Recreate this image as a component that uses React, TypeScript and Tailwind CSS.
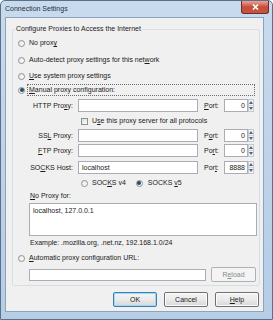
import React from "react";

const font = { fontFamily: '"Liberation Sans", Arial, sans-serif' };

const U: React.FC<{ children: React.ReactNode }> = ({ children }) => (
  <span className="underline underline-offset-[1px]">{children}</span>
);

const Radio: React.FC<{ checked?: boolean }> = ({ checked }) => (
  <span className="w-[7px] h-[7px] shrink-0 rounded-full border border-[#8e8f8f] bg-gradient-to-br from-[#e6e6e6] to-[#ffffff] flex items-center justify-center">
    {checked && <span className="w-[4px] h-[4px] rounded-full bg-[#1f4e6b]" />}
  </span>
);

const Check: React.FC = () => (
  <span className="w-[7px] h-[7px] shrink-0 border border-[#8e8f8f] bg-gradient-to-br from-[#dcdcdc] to-[#ffffff]" />
);

const Spinner: React.FC = () => (
  <div className="w-[6px] h-[13px] flex flex-col border border-[#c5c9cf] bg-[#f4f4f4]">
    <div className="flex-1 flex items-center justify-center border-b border-[#d0d4d9]">
      <svg width="4" height="3" viewBox="0 0 4 3">
        <path d="M0 3L2 0L4 3Z" fill="#4d6185" />
      </svg>
    </div>
    <div className="flex-1 flex items-center justify-center">
      <svg width="4" height="3" viewBox="0 0 4 3">
        <path d="M0 0L2 3L4 0Z" fill="#4d6185" />
      </svg>
    </div>
  </div>
);

const ProxyRow: React.FC<{
  label: React.ReactNode;
  port: React.ReactNode;
  host?: string;
  portValue: string;
  className?: string;
}> = ({ label, port, host, portValue, className }) => (
  <div className={"flex items-center h-[13px] " + (className ?? "")}>
    <div className="w-[65px] text-right pr-[5px]">{label}</div>
    <div className="w-[120px] h-[13px] border border-[#abadb3] bg-white flex items-center pl-[3px]">
      {host}
    </div>
    <div className="w-[26px] pl-[6px]">{port}</div>
    <div className="w-[24px] h-[13px] border border-[#abadb3] bg-white flex items-center justify-end pr-[2px]">
      {portValue}
    </div>
    <Spinner />
  </div>
);

const Button: React.FC<{ children: React.ReactNode; primary?: boolean }> = ({
  children,
  primary,
}) => (
  <div
    className={
      "w-[44px] h-[15px] rounded-[2px] border flex items-center justify-center bg-gradient-to-b from-[#f3f3f3] via-[#ebebeb] to-[#d6d6d6] " +
      (primary
        ? "border-[#3c7fb1] shadow-[inset_0_0_0_1px_#9fd9f7]"
        : "border-[#707070] shadow-[inset_0_0_0_1px_#fcfcfc]")
    }
  >
    {children}
  </div>
);

export default function App() {
  return (
    <div
      className="w-[273px] h-[320px] flex flex-col text-[7px] leading-[12px] text-[#1a1a1a] bg-gradient-to-b from-[#c8dbee] via-[#bed3e9] to-[#b6cde6] border border-[#5b6f86] rounded-t-[5px]"
      style={font}
    >
      {/* title bar */}
      <div className="h-[16px] flex items-start">
        <span className="pl-[4px] pt-[2px] text-[#1f2f40]">Connection Settings</span>
        <div className="ml-auto mr-[3px] w-[28px] h-[13px] rounded-b-[3px] border border-t-0 border-[#6d2a2a] bg-gradient-to-b from-[#e8a497] via-[#c94b3b] to-[#c2573f] flex items-center justify-center">
          <svg width="7" height="6" viewBox="0 0 7 6">
            <path d="M1 0.5L6 5.5M6 0.5L1 5.5" stroke="#fff" strokeWidth="1.6" />
          </svg>
        </div>
      </div>

      {/* client area */}
      <div className="ml-[4px] w-[259px] h-[295px] bg-[#f0f0f0] border border-[#8da2bc] flex flex-col">
        <fieldset className="ml-[6px] w-[248px] mt-[5px] h-[263px] border border-[#d5dfe5] rounded-[2px] flex flex-col">
          <legend className="ml-[2px] px-[1px] leading-[12px]">
            Configure Proxies to Access the Internet
          </legend>

          <div className="pl-[5px] flex flex-col">
            <div className="flex items-center gap-[4px] h-[12px] mt-[2px]">
              <Radio />
              <span>
                No prox<U>y</U>
              </span>
            </div>
            <div className="flex items-center gap-[4px] h-[12px] mt-[5px]">
              <Radio />
              <span>
                Auto-detect proxy settings for this net<U>w</U>ork
              </span>
            </div>
            <div className="flex items-center gap-[4px] h-[12px] mt-[4px]">
              <Radio />
              <span>
                <U>U</U>se system proxy settings
              </span>
            </div>
            <div className="flex items-center gap-[2px] h-[12px] mt-[2px]">
              <Radio checked />
              <span className="flex-1 mr-[4px] border border-dotted border-[#6b6b6b] pl-[1px] leading-[10px]">
                <U>M</U>anual proxy configuration:
              </span>
            </div>
          </div>

          <ProxyRow
            className="mt-[3px]"
            label={
              <>
                HTTP Pro<U>x</U>y:
              </>
            }
            port={
              <>
                <U>P</U>ort:
              </>
            }
            portValue="0"
          />

          <div className="flex items-center gap-[4px] h-[12px] mt-[3px] pl-[68px]">
            <Check />
            <span>
              U<U>s</U>e this proxy server for all protocols
            </span>
          </div>

          <ProxyRow
            className="mt-[2px]"
            label={
              <>
                SS<U>L</U> Proxy:
              </>
            }
            port={
              <>
                P<U>o</U>rt:
              </>
            }
            portValue="0"
          />
          <ProxyRow
            className="mt-[2px]"
            label={
              <>
                <U>F</U>TP Proxy:
              </>
            }
            port={
              <>
                Po<U>r</U>t:
              </>
            }
            portValue="0"
          />
          <ProxyRow
            className="mt-[4px]"
            label={
              <>
                SO<U>C</U>KS Host:
              </>
            }
            host="localhost"
            port={
              <>
                Por<U>t</U>:
              </>
            }
            portValue="8888"
          />

          <div className="flex items-center h-[12px] mt-[3px] pl-[68px]">
            <Radio />
            <span className="ml-[4px]">
              SOC<U>K</U>S v4
            </span>
            <span className="ml-[10px]">
              <Radio checked />
            </span>
            <span className="ml-[5px]">
              SOCKS <U>v</U>5
            </span>
          </div>

          <div className="h-[12px] mt-[1px] pl-[17px] flex items-center">
            <span>
              <U>N</U>o Proxy for:
            </span>
          </div>
          <div className="ml-[16px] w-[228px] h-[33px] mt-[1px] border border-[#abadb3] bg-white px-[3px] leading-[14px]">
            localhost, 127.0.0.1
          </div>
          <div className="h-[12px] mt-[1px] pl-[17px] flex items-center">
            Example: .mozilla.org, .net.nz, 192.168.1.0/24
          </div>

          <div className="flex items-center gap-[4px] h-[12px] mt-[3px] pl-[5px]">
            <Radio />
            <span>
              <U>A</U>utomatic proxy configuration URL:
            </span>
          </div>
          <div className="flex items-center h-[15px] mt-[3px] pl-[16px]">
            <div className="w-[177px] h-[12px] border border-[#abadb3] bg-white" />
            <div className="ml-[5px] w-[45px] h-[15px] rounded-[2px] border border-[#adb2b5] bg-[#f4f4f4] text-[#8a8a8a] flex items-center justify-center">
              R<U>e</U>load
            </div>
          </div>
        </fieldset>

        <div className="flex justify-end gap-[7px] mt-[6px] mr-[4px]">
          <Button primary>OK</Button>
          <Button>Cancel</Button>
          <Button>
            <span>
              <U>H</U>elp
            </span>
          </Button>
        </div>
      </div>
    </div>
  );
}
